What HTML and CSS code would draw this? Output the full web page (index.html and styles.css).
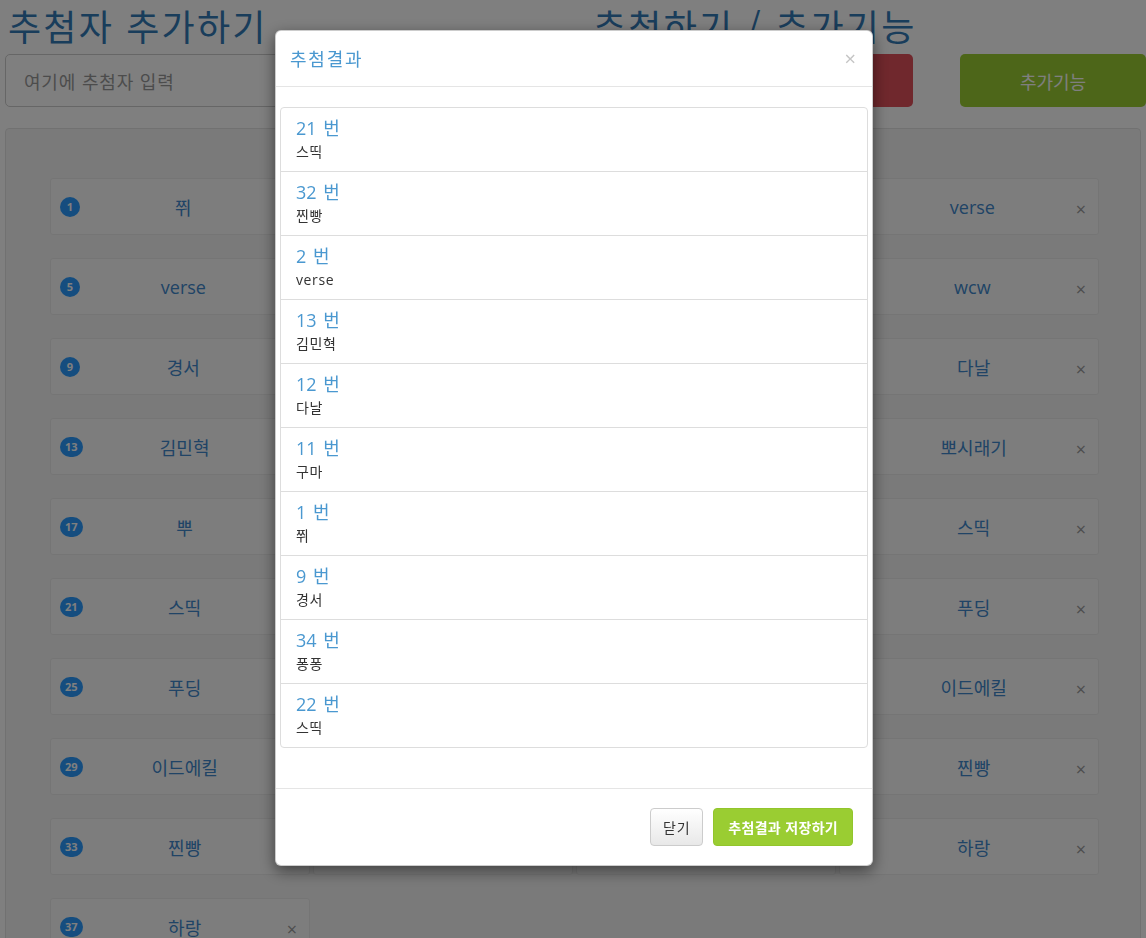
FILE: index.html
```html
<!DOCTYPE html>
<html lang="ko">
<head>
<meta charset="utf-8">
<title>추첨</title>
<link rel="stylesheet" href="styles.css">
</head>
<body>
<div class="page">
  <div class="top">
    <div class="add-col">
      <h1 class="title">추첨자 추가하기</h1>
      <input class="name-input" type="text" placeholder="여기에 추첨자 입력">
    </div>
    <div class="action-col">
      <h1 class="title">추첨하기 / 추가기능</h1>
      <div class="actions">
        <button class="btn-draw">추첨하기</button>
        <button class="btn-extra">추가기능</button>
      </div>
    </div>
  </div>
  <div class="well">
    <div class="grid">
      <div class="card"><span class="badge">1</span><span class="name">쮜</span><span class="remove">×</span></div>
      <div class="card"><span class="badge">2</span><span class="name">verse</span><span class="remove">×</span></div>
      <div class="card"><span class="badge">3</span><span class="name">wcw</span><span class="remove">×</span></div>
      <div class="card"><span class="badge">4</span><span class="name">verse</span><span class="remove">×</span></div>
      <div class="card"><span class="badge">5</span><span class="name">verse</span><span class="remove">×</span></div>
      <div class="card"><span class="badge">6</span><span class="name">wcw</span><span class="remove">×</span></div>
      <div class="card"><span class="badge">7</span><span class="name">경서</span><span class="remove">×</span></div>
      <div class="card"><span class="badge">8</span><span class="name">wcw</span><span class="remove">×</span></div>
      <div class="card"><span class="badge">9</span><span class="name">경서</span><span class="remove">×</span></div>
      <div class="card"><span class="badge">10</span><span class="name">구마</span><span class="remove">×</span></div>
      <div class="card"><span class="badge">11</span><span class="name">구마</span><span class="remove">×</span></div>
      <div class="card"><span class="badge">12</span><span class="name">다날</span><span class="remove">×</span></div>
      <div class="card"><span class="badge">13</span><span class="name">김민혁</span><span class="remove">×</span></div>
      <div class="card"><span class="badge">14</span><span class="name">다날</span><span class="remove">×</span></div>
      <div class="card"><span class="badge">15</span><span class="name">뽀시래기</span><span class="remove">×</span></div>
      <div class="card"><span class="badge">16</span><span class="name">뽀시래기</span><span class="remove">×</span></div>
      <div class="card"><span class="badge">17</span><span class="name">뿌</span><span class="remove">×</span></div>
      <div class="card"><span class="badge">18</span><span class="name">뿌</span><span class="remove">×</span></div>
      <div class="card"><span class="badge">19</span><span class="name">스띡</span><span class="remove">×</span></div>
      <div class="card"><span class="badge">20</span><span class="name">스띡</span><span class="remove">×</span></div>
      <div class="card"><span class="badge">21</span><span class="name">스띡</span><span class="remove">×</span></div>
      <div class="card"><span class="badge">22</span><span class="name">스띡</span><span class="remove">×</span></div>
      <div class="card"><span class="badge">23</span><span class="name">푸딩</span><span class="remove">×</span></div>
      <div class="card"><span class="badge">24</span><span class="name">푸딩</span><span class="remove">×</span></div>
      <div class="card"><span class="badge">25</span><span class="name">푸딩</span><span class="remove">×</span></div>
      <div class="card"><span class="badge">26</span><span class="name">이드에킬</span><span class="remove">×</span></div>
      <div class="card"><span class="badge">27</span><span class="name">이드에킬</span><span class="remove">×</span></div>
      <div class="card"><span class="badge">28</span><span class="name">이드에킬</span><span class="remove">×</span></div>
      <div class="card"><span class="badge">29</span><span class="name">이드에킬</span><span class="remove">×</span></div>
      <div class="card"><span class="badge">30</span><span class="name">찐빵</span><span class="remove">×</span></div>
      <div class="card"><span class="badge">31</span><span class="name">찐빵</span><span class="remove">×</span></div>
      <div class="card"><span class="badge">32</span><span class="name">찐빵</span><span class="remove">×</span></div>
      <div class="card"><span class="badge">33</span><span class="name">찐빵</span><span class="remove">×</span></div>
      <div class="card"><span class="badge">34</span><span class="name">퐁퐁</span><span class="remove">×</span></div>
      <div class="card"><span class="badge">35</span><span class="name">하랑</span><span class="remove">×</span></div>
      <div class="card"><span class="badge">36</span><span class="name">하랑</span><span class="remove">×</span></div>
      <div class="card"><span class="badge">37</span><span class="name">하랑</span><span class="remove">×</span></div>
    </div>
  </div>
</div>

<div class="backdrop"></div>

<div class="modal">
  <div class="modal-dialog">
    <div class="modal-header">
      <h4 class="modal-title">추첨결과</h4>
      <span class="modal-close">×</span>
    </div>
    <div class="modal-body">
      <div class="list-group">
        <div class="list-item"><h4 class="item-num">21 번</h4><p class="item-name">스띡</p></div>
        <div class="list-item"><h4 class="item-num">32 번</h4><p class="item-name">찐빵</p></div>
        <div class="list-item"><h4 class="item-num">2 번</h4><p class="item-name">verse</p></div>
        <div class="list-item"><h4 class="item-num">13 번</h4><p class="item-name">김민혁</p></div>
        <div class="list-item"><h4 class="item-num">12 번</h4><p class="item-name">다날</p></div>
        <div class="list-item"><h4 class="item-num">11 번</h4><p class="item-name">구마</p></div>
        <div class="list-item"><h4 class="item-num">1 번</h4><p class="item-name">쮜</p></div>
        <div class="list-item"><h4 class="item-num">9 번</h4><p class="item-name">경서</p></div>
        <div class="list-item"><h4 class="item-num">34 번</h4><p class="item-name">퐁퐁</p></div>
        <div class="list-item"><h4 class="item-num">22 번</h4><p class="item-name">스띡</p></div>
      </div>
    </div>
    <div class="modal-footer">
      <button class="btn-close">닫기</button>
      <button class="btn-save">추첨결과 저장하기</button>
    </div>
  </div>
</div>
</body>
</html>
```

FILE: styles.css
```css
* { box-sizing: border-box; }

html, body {
  margin: 0;
  padding: 0;
  background: #ffffff;
  overflow: hidden;
  height: 938px;
}

body {
  font-family: "Open Sans", "Noto Sans CJK KR", sans-serif;
  color: #333333;
}

.page {
  padding: 0 5px;
}

.top {
  display: flex;
  justify-content: space-between;
  margin-right: -5px;
}

.add-col {
  width: 555px;
}

.action-col {
  width: 553px;
}

.title {
  margin: 0 0 4px 3px;
  font-size: 36px;
  letter-spacing: 2.2px;
  line-height: 50px;
  font-weight: 400;
  color: #337ab7;
  white-space: nowrap;
  font-family: "Noto Sans CJK KR", sans-serif;
}

.action-col .title {
  margin-left: 0;
}

.name-input {
  display: block;
  width: 100%;
  height: 53px;
  padding: 0 18px;
  font-size: 18px;
  font-family: "Noto Sans CJK KR", sans-serif;
  border: 1px solid #cccccc;
  border-radius: 5px;
  background: #ffffff;
  color: #555555;
}

.name-input::placeholder {
  color: #999999;
  letter-spacing: 0.8px;
}

.actions {
  display: flex;
  justify-content: space-between;
}

.btn-draw,
.btn-extra {
  height: 53px;
  border: none;
  border-radius: 5px;
  color: #ffffff;
  font-size: 18px;
  font-family: "Noto Sans CJK KR", sans-serif;
}

.btn-draw {
  width: 320px;
  background: #e0505a;
}

.btn-extra {
  width: 186px;
  background: #9acd32;
}

.well {
  margin-top: 21px;
  background: #f5f5f5;
  border: 1px solid #e3e3e3;
  border-radius: 4px;
  padding: 49px 42px 40px 44px;
}

.grid {
  display: grid;
  grid-template-columns: repeat(4, 260px);
  column-gap: 3px;
  row-gap: 23px;
}

.card {
  height: 57px;
  display: flex;
  align-items: center;
  padding: 0 12px 0 9px;
  background: #fbfbfb;
  border: 1px solid #ebebeb;
  border-radius: 3px;
}

.badge {
  min-width: 20px;
  height: 20px;
  padding: 0 5px;
  border-radius: 10px;
  background: #2a9bff;
  color: #ffffff;
  font-size: 11px;
  font-weight: 700;
  line-height: 20px;
  text-align: center;
  font-family: "Open Sans", sans-serif;
}

.name {
  flex: 1;
  text-align: center;
  font-size: 18px;
  color: #4088cc;
}

.remove {
  font-size: 18px;
  color: #9a9a9a;
  line-height: 1;
  margin-top: 4px;
}

.backdrop {
  position: fixed;
  inset: 0;
  background: rgba(0, 0, 0, 0.5);
}

.modal {
  position: fixed;
  inset: 0;
}

.modal-dialog {
  width: 598px;
  margin: 30px auto 0;
  transform: translateX(1px);
  background: #ffffff;
  border: 1px solid rgba(0, 0, 0, 0.2);
  border-radius: 6px;
  box-shadow: 0 5px 15px rgba(0, 0, 0, 0.5);
  overflow: hidden;
}

.modal-header {
  display: flex;
  justify-content: space-between;
  align-items: center;
  padding: 15px 16px 15px 14px;
  border-bottom: 1px solid #e5e5e5;
}

.modal-title {
  margin: 0;
  font-size: 18px;
  letter-spacing: 1.8px;
  line-height: 25px;
  font-weight: 400;
  color: #4a98d0;
  font-family: "Noto Sans CJK KR", sans-serif;
}

.modal-close {
  font-size: 20px;
  line-height: 25px;
  color: #c4c4c4;
}

.modal-body {
  padding: 20px 4px 40px 4px;
}

.list-group {
  border: 1px solid #dddddd;
  border-radius: 4px;
}

.list-item {
  padding: 10px 15px;
  border-bottom: 1px solid #dddddd;
}

.list-item:last-child {
  border-bottom: none;
}

.item-num {
  margin: 0 0 5px;
  font-size: 18px;
  line-height: 20px;
  font-weight: 400;
  word-spacing: 2px;
  color: #4a98d0;
}

.item-name {
  margin: 0;
  font-size: 14px;
  letter-spacing: 0.6px;
  line-height: 18px;
  color: #333333;
}

.modal-footer {
  display: flex;
  justify-content: flex-end;
  gap: 10px;
  padding: 19px 19px 19px;
  border-top: 1px solid #e5e5e5;
}

.btn-close,
.btn-save {
  height: 38px;
  padding: 0 12px;
  border-radius: 4px;
  font-size: 14px;
  font-family: "Noto Sans CJK KR", sans-serif;
}

.btn-close {
  background: linear-gradient(#ffffff, #e8e8e8);
  border: 1px solid #cccccc;
  color: #333333;
  letter-spacing: 0.8px;
}

.btn-save {
  padding: 0 14px;
  background: #9acd32;
  border: 1px solid #92c52c;
  color: #ffffff;
  font-weight: 700;
  letter-spacing: 0.3px;
}
```
